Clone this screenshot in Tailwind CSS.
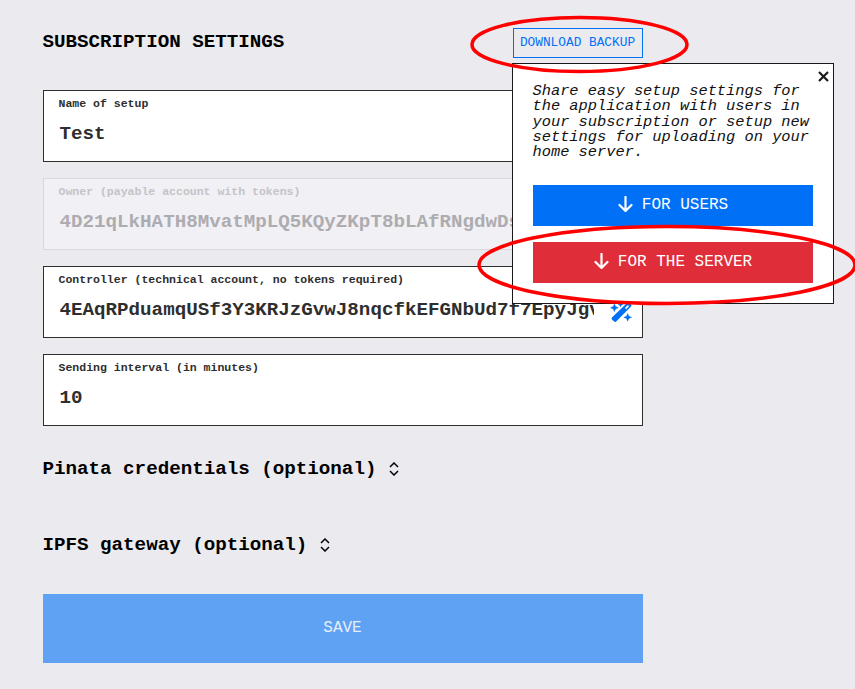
<!DOCTYPE html>
<html lang="en">
<head>
<meta charset="utf-8">
<title>Subscription settings</title>
<script src="https://cdn.jsdelivr.net/npm/@tailwindcss/browser@4"></script>
</head>
<body class="relative h-[689px] w-[855px] overflow-hidden bg-[#ebeaef] font-['Liberation_Mono',monospace] text-black">
<main class="ml-[42.5px] flex w-[600px] flex-col pt-7">
  <header class="flex h-[30px] items-center justify-between">
    <h1 class="-mt-0.5 text-[19.2px] leading-[22px] font-bold">SUBSCRIPTION SETTINGS</h1>
    <button class="h-[30px] w-[130px] border border-[#0071f7] pt-px text-[12.8px] leading-none text-[#0071f7]">DOWNLOAD BACKUP</button>
  </header>
  <form class="mt-8 flex flex-col gap-4 font-bold text-[#2e2e2e]">
    <label class="block h-[72px] border border-[#2e2e2e] bg-white px-[15px] pt-[6px]">
      <span class="block text-[11.52px] leading-[14px]">Name of setup</span>
      <span class="mt-3 ml-px block text-[19.2px] leading-[22px]">Test</span>
    </label>
    <label class="block h-[72px] border border-[#d9d8dd] bg-[#f1f0f4] px-[15px] pt-[6px]">
      <span class="block text-[11.52px] leading-[14px] text-[#c4c3c8]">Owner (payable account with tokens)</span>
      <span class="mt-3 ml-px block w-[535px] overflow-hidden text-[19.2px] leading-[22px] whitespace-nowrap text-[#adacb0]">4D21qLkHATH8MvatMpLQ5KQyZKpT8bLAfRNgdwDsYq</span>
    </label>
    <label class="flex h-[72px] justify-between border border-[#2e2e2e] bg-white pt-[6px] pr-[10px] pl-[15px]">
      <span class="block">
        <span class="block text-[11.52px] leading-[14px]">Controller (technical account, no tokens required)</span>
        <span class="mt-3 ml-px block w-[534px] overflow-hidden text-[19.2px] leading-[22px] whitespace-nowrap">4EAqRPduamqUSf3Y3KRJzGvwJ8nqcfkEFGNbUd7f7EpyJgv</span>
      </span>
      <svg class="mt-[28px] h-[22px] w-[22px] shrink-0" viewBox="0 0 24 24" fill="#0071f7"><path d="M18.600 2.300a2 2 0 0 1 2.800 0l1.300 1.300a2 2 0 0 1 0 2.800L7 22.200a2 2 0 0 1-2.800 0l-1.800-1.800a2 2 0 0 1 0-2.800zM16.300 7.600l1.300 1.300 3.200-3.200-1.300-1.300z" fill-rule="evenodd"/><path d="m4.800 3 1.300 3 3 1.300-3 1.300-1.300 3-1.300-3-3-1.300 3-1.300zM19.300 13.500l1.300 3 3 1.300-3 1.300-1.300 3-1.300-3-3-1.300 3-1.300zM11.500 1l.8 2 2 .8-2 .8-.8 2-.8-2-2-.8 2-.8z" stroke="#0071f7" stroke-width=".4"/></svg>
    </label>
    <label class="block h-[72px] border border-[#2e2e2e] bg-white px-[15px] pt-[6px]">
      <span class="block text-[11.52px] leading-[14px]">Sending interval (in minutes)</span>
      <span class="mt-3 ml-px block text-[19.2px] leading-[22px]">10</span>
    </label>
  </form>
  <h2 class="mt-8 flex h-[22px] items-center text-[19.2px] leading-[22px] font-bold">Pinata credentials (optional)
    <svg class="ml-[13px] h-[14px] w-[10px]" viewBox="0 0 10 14" fill="none" stroke="#000" stroke-width="1.5"><path d="M1 5 5 1l4 4M1 9l4 4 4-4"/></svg>
  </h2>
  <h2 class="mt-[54px] flex h-[22px] items-center text-[19.2px] leading-[22px] font-bold">IPFS gateway (optional)
    <svg class="ml-[13px] h-[14px] w-[10px]" viewBox="0 0 10 14" fill="none" stroke="#000" stroke-width="1.5"><path d="M1 5 5 1l4 4M1 9l4 4 4-4"/></svg>
  </h2>
  <button class="mt-[38px] h-[69px] bg-[#5fa2f4] pb-0.5 text-base leading-none text-[#e6eefa]">SAVE</button>
</main>
<section class="absolute top-[63px] left-[512px] flex h-[241px] w-[322px] flex-col border border-[#18181b] bg-white px-5 pt-5">
  <svg class="absolute top-[7px] right-[4.5px] h-[11px] w-[11px]" viewBox="0 0 11 11" fill="none" stroke="#1c1c1c" stroke-width="2.200"><path d="m1 1 9 9m0-9-9 9"/></svg>
  <p class="-ml-[0.5px] w-[280px] text-[15.36px] leading-[15.36px] text-[#111] italic">Share easy setup settings for the application with users in your subscription or setup new settings for uploading on your home server.</p>
  <div class="mt-6 flex flex-col gap-4 text-base leading-none text-white">
    <button class="flex h-[41px] items-center justify-center gap-[9px] bg-[#0071f7] pb-px">
      <svg class="-mt-[2px] h-4 w-[15px]" viewBox="0 0 15 16" fill="none" stroke="#fff" stroke-width="2.200" stroke-linecap="round" stroke-linejoin="round"><path d="M7.500 1v13.500M1.500 9l6 6 6-6"/></svg>FOR USERS</button>
    <button class="flex h-[41px] items-center justify-center gap-[9px] bg-[#e02d3a] pb-px">
      <svg class="-mt-[2px] h-4 w-[15px]" viewBox="0 0 15 16" fill="none" stroke="#fff" stroke-width="2.200" stroke-linecap="round" stroke-linejoin="round"><path d="M7.500 1v13.500M1.500 9l6 6 6-6"/></svg>FOR THE SERVER</button>
  </div>
</section>
<svg class="pointer-events-none absolute inset-0" width="855" height="689" fill="none" stroke="#f00" stroke-width="3.500"><ellipse cx="579.500" cy="44.500" rx="107.500" ry="27"/><ellipse cx="667" cy="265" rx="188" ry="38.500"/></svg>
</body>
</html>
